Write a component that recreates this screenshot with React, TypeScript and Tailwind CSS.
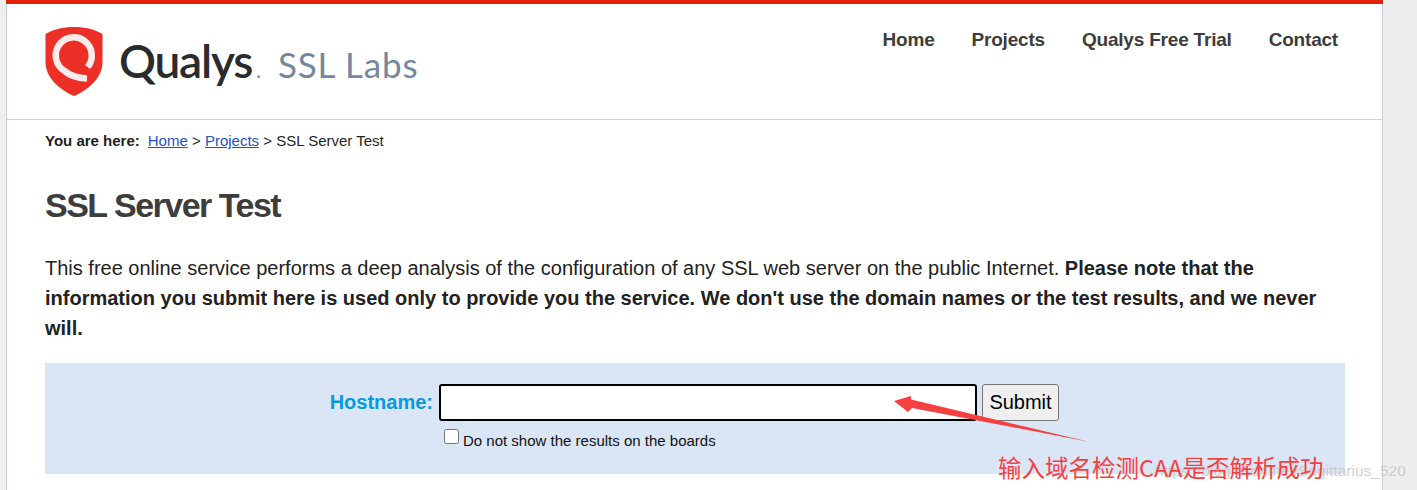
import React from 'react';

const arial = "font-['Liberation_Sans',Arial,sans-serif]";

const QualysMark = () => (
  <svg width="58" height="69" viewBox="0 0 58 69" className="block">
    <path d="M29 0C40 0 50 2.500 57.500 7L57.500 35C57.500 50 45 62 29 69C13 62 0.500 50 0.500 35L0.500 7C8 2.500 18 0 29 0Z" fill="#ee2f27" />
    <path d="M42.500 40A18 18 0 1 0 19 43.500C25 49 33 51 42 51.500" fill="none" stroke="#fdecea" strokeWidth="6.500" />
  </svg>
);

const NAV = ['Home', 'Projects', 'Qualys Free Trial', 'Contact'];

export default function App() {
  return (
    <div className={`relative h-[490px] overflow-hidden bg-[#eeeeee] pl-[6px] ${arial}`}>
      <div className="w-[1377px] h-[490px] bg-white border-x border-[#bcd3de] box-border">
        <div className="h-[4px] bg-[#e3200c] -mx-px" />

        <header className="h-[116px] border-b border-[#c4d3da] flex justify-between pl-[38px] pr-[44px]">
          <div className="flex items-start pt-[23px]">
            <QualysMark />
            <span className="ml-[16px] mt-[9px] font-['Lato',sans-serif] font-semibold text-[46px] leading-[50px] tracking-[-1.2px] text-[#2a2b2d]">Qualys<span className="ml-[4px] text-[#8a8f96] text-[20px] tracking-normal">.</span></span>
            <span className="ml-[17px] mt-[17px] font-['Lato',sans-serif] text-[35px] leading-[40px] tracking-[0.8px] text-[#7587a0]">SSL Labs</span>
          </div>
          <nav className="flex gap-[37px] pt-[24px]">
            {NAV.map(item => (
              <a key={item} className="text-[19px] leading-[23px] font-bold tracking-[-0.2px] text-[#3d3d3d]">{item}</a>
            ))}
          </nav>
        </header>

        <div className="px-[38px]">
          <p className="pt-[12px] text-[15px] leading-[18px] text-[#1f1f1f]">
            <b>You are here:</b>
            <a className="ml-[8px] text-[#1a55c4] underline">Home</a> &gt; <a className="text-[#1a55c4] underline">Projects</a> &gt; SSL Server Test
          </p>

          <h1 className="mt-[35px] text-[34px] leading-[40px] font-bold tracking-[-1.5px] text-[#3d3d3d]">SSL Server Test</h1>

          <p className="mt-[28px] w-[1290px] text-[20px] leading-[30px] text-[#222222]">
            This free online service performs a deep analysis of the configuration of any SSL web server on the public Internet. <b>Please note that the information you submit here is used only to provide you the service. We don't use the domain names or the test results, and we never will.</b>
          </p>

          <form className="mt-[20px] w-[1300px] h-[111px] bg-[#dae6f6] flex pt-[21px]">
            <label className="w-[388px] text-right text-[20px] leading-[36px] font-bold text-[#059be0]">Hostname:</label>
            <div className="ml-[6px]">
              <div className="flex gap-[5px]">
                <input className="w-[538px] h-[37px] bg-white border-2 border-black rounded-[3px] outline-none" />
                <button type="button" className="w-[77px] h-[37px] pb-[2px] bg-[#efefef] border border-[#767676] rounded-[3px] text-[20px] text-black">Submit</button>
              </div>
              <div className="flex items-start mt-[8px] ml-[5px]">
                <span className="w-[15px] h-[15px] bg-white border border-[#767676] rounded-[2.500px]" />
                <span className="ml-[4px] mt-[3px] text-[15px] leading-[17px] text-[#111111]">Do not show the results on the boards</span>
              </div>
            </div>
          </form>
        </div>
      </div>

      {/* annotation pasted over the page */}
      <svg width="210" height="60" viewBox="0 0 210 60" className="absolute left-[890px] top-[390px]">
        <path d="M4 11L21 6L21 9.500L200 52L22 18L18 22Z" fill="#f5403f" />
      </svg>
      <span className="absolute left-[1155px] top-[460px] whitespace-nowrap text-[15.500px] leading-[22px] text-[#c4c4c4]/80">https://blog.csdn.net/Sagittarius_520</span>
      <span className="absolute left-[998px] top-[451px] whitespace-nowrap font-['Noto_Sans_CJK_SC',sans-serif] text-[23.500px] leading-[32px] text-[#f5403f]">输入域名检测CAA是否解析成功</span>
    </div>
  );
}
